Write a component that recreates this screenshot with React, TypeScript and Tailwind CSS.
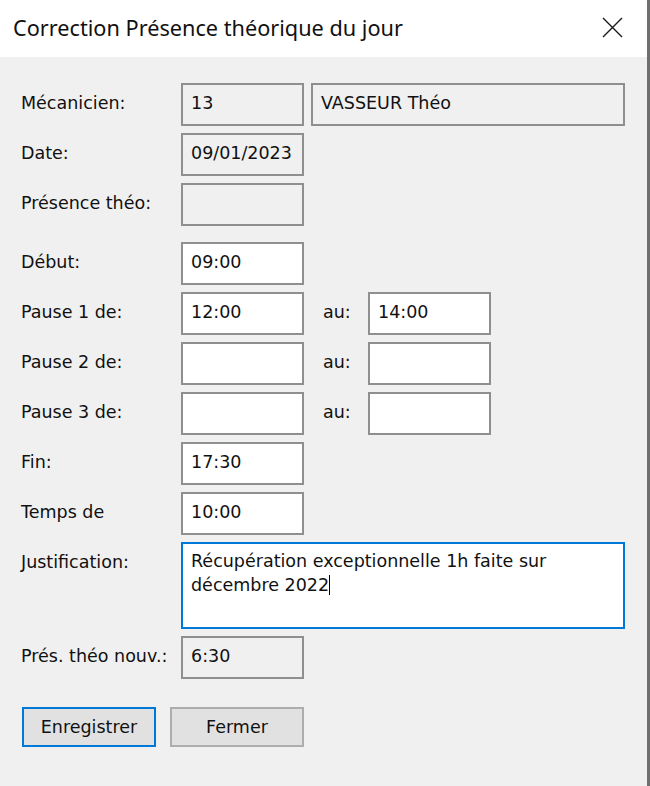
import React from "react";

const boxRO = "h-[43px] border-2 border-[#8f8f8f] bg-[#f0f0f0] pl-[8px] pt-[7px] leading-[22px] text-[#111]";
const boxW = "h-[43px] border-2 border-[#8f8f8f] bg-white pl-[8px] pt-[7px] leading-[22px] text-[#111]";
const label = "w-[160px] shrink-0 pt-[9px] leading-[22px] text-[#111]";

function Row({ l, children, className = "" }: { l: string; children: React.ReactNode; className?: string }) {
  return (
    <div className={"flex items-start " + className}>
      <div className={label}>{l}</div>
      {children}
    </div>
  );
}

function PauseRow({ l, a, b }: { l: string; a: string; b: string }) {
  return (
    <Row l={l} className="mb-[7px]">
      <div className={boxW + " w-[123px]"}>{a}</div>
      <div className="w-[64px] pl-[19px] pt-[9px] leading-[22px] text-[#111]">au:</div>
      <div className={boxW + " w-[123px]"}>{b}</div>
    </Row>
  );
}

export default function App() {
  return (
    <div
      className="w-[650px] h-[786px] bg-[#f0f0f0] border-r-[3px] border-[#6f6f6f] flex flex-col text-[17.5px]"
      style={{ fontFamily: '"DejaVu Sans", Verdana, sans-serif' }}
    >
      <div className="h-[57px] bg-white flex items-center justify-between pl-[13px] pr-[24px] shrink-0">
        <div className="text-[21.7px] text-[#111]" style={{ fontFamily: '"Noto Sans", "Open Sans", sans-serif' }}>
          Correction Présence théorique du jour
        </div>
        <svg width="21" height="21" viewBox="0 0 21 21" className="mt-[-2px]">
          <path d="M1 1 L20 20 M20 1 L1 20" stroke="#1a1a1a" strokeWidth="1.4" fill="none" />
        </svg>
      </div>
      <div className="pl-[21px] pt-[26px] flex flex-col">
        <Row l="Mécanicien:" className="mb-[7px]">
          <div className={boxRO + " w-[123px]"}>13</div>
          <div className={boxRO + " w-[314px] ml-[7px]"}>VASSEUR Théo</div>
        </Row>
        <Row l="Date:" className="mb-[7px]">
          <div className={boxRO + " w-[123px]"}>09/01/2023</div>
        </Row>
        <Row l="Présence théo:" className="mb-[16px]">
          <div className={boxRO + " w-[123px]"}></div>
        </Row>
        <Row l="Début:" className="mb-[7px]">
          <div className={boxW + " w-[123px]"}>09:00</div>
        </Row>
        <PauseRow l="Pause 1 de:" a="12:00" b="14:00" />
        <PauseRow l="Pause 2 de:" a="" b="" />
        <PauseRow l="Pause 3 de:" a="" b="" />
        <Row l="Fin:" className="mb-[7px]">
          <div className={boxW + " w-[123px]"}>17:30</div>
        </Row>
        <Row l="Temps de" className="mb-[7px]">
          <div className={boxW + " w-[123px]"}>10:00</div>
        </Row>
        <Row l="Justification:" className="mb-[7px]">
          <div className="w-[444px] h-[87px] border-2 border-[#0078d7] bg-white pl-[8px] pt-[5px] leading-[24px] text-[#111]">
            Récupération exceptionnelle 1h faite sur
            <br />
            décembre 2022<span className="inline-block w-[1px] h-[20px] bg-black align-[-4px]"></span>
          </div>
        </Row>
        <Row l="Prés. théo nouv.:" className="mb-[28px]">
          <div className={boxRO + " w-[123px]"}>6:30</div>
        </Row>
        <div className="flex gap-[14px] pl-[1px]">
          <div className="w-[134px] h-[40px] border-2 border-[#0078d7] bg-[#e1e1e1] flex items-center justify-center text-[#111]">
            Enregistrer
          </div>
          <div className="w-[134px] h-[40px] border-2 border-[#adadad] bg-[#e1e1e1] flex items-center justify-center text-[#111]">
            Fermer
          </div>
        </div>
      </div>
    </div>
  );
}
